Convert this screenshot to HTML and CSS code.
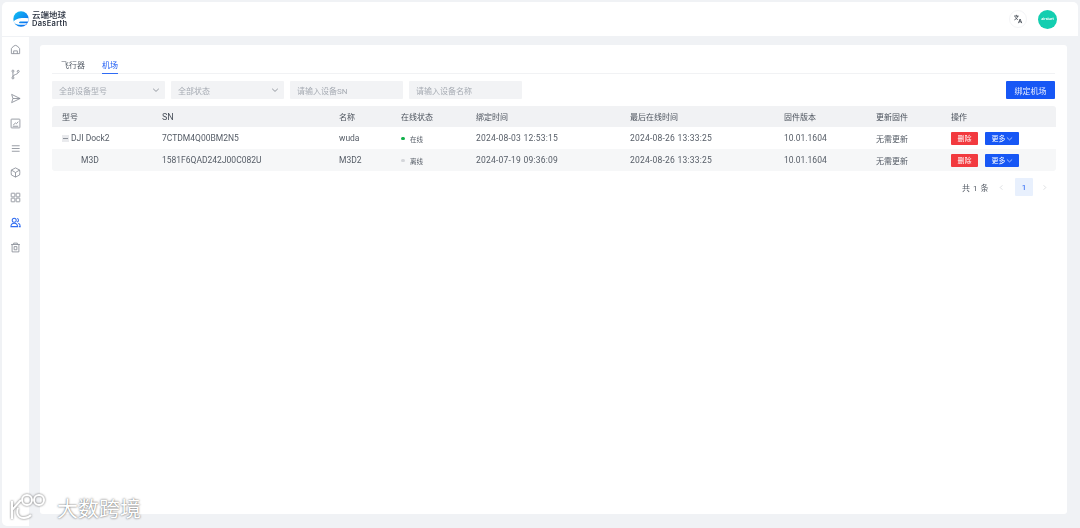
FILE: index.html
```html
<!DOCTYPE html>
<html lang="zh-CN">
<head>
<meta charset="utf-8">
<title>机场</title>
<link rel="stylesheet" href="styles.css">
</head>
<body>
<div class="app">
  <header class="topbar">
    <div class="brand">
      <svg class="brand-mark" viewBox="0 0 16 16">
        <defs><linearGradient id="earth" x1="0" y1="0" x2="1" y2="1"><stop offset="0" stop-color="#12c3f2"/><stop offset="1" stop-color="#0a62f0"/></linearGradient></defs>
        <circle cx="8" cy="8" r="7.7" fill="url(#earth)"/>
        <path d="M.6 10.400C3 7.600 7 6.200 15.700 7.200c0 1.300-.3 2.300-.8 3.200H8.200c-1.300 0-2.200.5-2.200 1 0 .6 1.200.9 2.800.9h5.200c-.5.500-1 1-1.700 1.400H6.200C3.800 13.700 1.500 12.600.6 10.400z" fill="#fff"/>
      </svg>
      <div class="brand-text"><span class="brand-cn">云端地球</span><span class="brand-en">DasEarth</span></div>
    </div>
    <div class="top-actions">
      <span class="lang-btn">
        <svg viewBox="0 0 12 12" class="lang-icon"><path d="M1.200 2.500h5.600M4 1v1.500M5.700 2.500c-.5 2-1.800 3.500-4 4.600M2.800 4c.6 1.200 1.500 2 3 2.800M6.500 11l2-5 2 5M7.200 9.400h2.600" fill="none" stroke="#3d444e" stroke-width="1"/></svg>
      </span>
      <span class="avatar"><span class="avatar-text">airstart</span></span>
    </div>
  </header>
  <div class="body-row">
    <nav class="sidebar">
      <svg class="nav-icon" viewBox="0 0 12 12"><path d="M1.500 5 4 2.200q2-1.400 4 0L10.500 5v5.500h-9zM4 10.500V7.500h4v3"/></svg>
      <svg class="nav-icon" viewBox="0 0 12 12"><circle cx="3.200" cy="2.300" r="1.100"/><circle cx="3.200" cy="9.700" r="1.100"/><circle cx="9" cy="2.600" r="1.100"/><path d="M3.200 3.400v5.200M9 3.700c0 2.500-5.800 2-5.800 4.700"/></svg>
      <svg class="nav-icon" viewBox="0 0 12 12"><path d="M1.800 1.500 11 6l-9.200 4.500L3.200 6zM3.200 6H11"/></svg>
      <svg class="nav-icon" viewBox="0 0 12 12"><rect x="1.200" y="1.200" width="9.600" height="9.600" rx=".6"/><path d="M3 9h6M3.500 7.600 6 5.500l1 .8 2-2.300"/></svg>
      <svg class="nav-icon" viewBox="0 0 12 12"><path d="M2 3h8.500M2 6h8.500M2 9h8.500"/></svg>
      <svg class="nav-icon" viewBox="0 0 12 12"><path d="M6 1 10.500 3.300c.3 1.600.3 3.800 0 5.400L6 11 1.500 8.700c-.3-1.600-.3-3.800 0-5.400zM1.500 3.300 6 6l4.500-2.700M6 6v5"/></svg>
      <svg class="nav-icon" viewBox="0 0 12 12"><rect x="1.300" y="1.300" width="4" height="4" rx=".4"/><rect x="6.700" y="1.300" width="4" height="4" rx=".4"/><rect x="1.300" y="6.700" width="4" height="4" rx=".4"/><rect x="6.700" y="6.700" width="4" height="4" rx=".4"/></svg>
      <svg class="nav-icon nav-icon-active" viewBox="0 0 12 12"><circle cx="4.600" cy="3.500" r="2.200"/><path d="M1 10.500c0-2.500 1.500-3.700 3.600-3.700s3.600 1.200 3.600 3.700zM7.800 1.500a2.100 2.100 0 0 1 0 4M9 6.900c1.400.4 2.200 1.500 2.200 3.600H9.600"/></svg>
      <svg class="nav-icon" viewBox="0 0 12 12"><path d="M1.200 2.700h9.600M4 2.700V1.200h4v1.500M2.300 2.700v8.100h7.400V2.700M4.500 5v3.500h3V5z"/></svg>
    </nav>
    <main class="content">
      <section class="card">
        <div class="tabs">
          <span class="tab">飞行器</span>
          <span class="tab tab-active">机场</span>
        </div>
        <div class="filters">
          <div class="field field-select"><span>全部设备型号</span><svg class="caret" viewBox="0 0 8 8"><path d="m1.200 2.800 2.800 2.600 2.800-2.600"/></svg></div>
          <div class="field field-select"><span>全部状态</span><svg class="caret" viewBox="0 0 8 8"><path d="m1.200 2.800 2.800 2.600 2.800-2.600"/></svg></div>
          <div class="field"><span>请输入设备SN</span></div>
          <div class="field"><span>请输入设备名称</span></div>
          <button class="btn-primary">绑定机场</button>
        </div>
        <div class="table">
          <div class="row row-head">
            <span>型号</span><span class="latin">SN</span><span>名称</span><span>在线状态</span><span>绑定时间</span><span>最后在线时间</span><span>固件版本</span><span>更新固件</span><span>操作</span>
          </div>
          <div class="row">
            <span class="model"><i class="collapse"></i>DJI Dock2</span><span>7CTDM4Q00BM2N5</span><span>wuda</span>
            <span class="status"><i class="dot dot-on"></i>在线</span>
            <span class="time">2024-08-03 12:53:15</span><span class="time">2024-08-26 13:33:25</span><span>10.01.1604</span><span class="cjk">无需更新</span>
            <span class="ops"><button class="btn-del">删除</button><button class="btn-more">更多<svg viewBox="0 0 8 8"><path d="m1 2.800 3 2.800 3-2.800"/></svg></button></span>
          </div>
          <div class="row row-alt">
            <span class="model-child">M3D</span><span>1581F6QAD242J00C082U</span><span>M3D2</span>
            <span class="status"><i class="dot dot-off"></i>离线</span>
            <span class="time">2024-07-19 09:36:09</span><span class="time">2024-08-26 13:33:25</span><span>10.01.1604</span><span class="cjk">无需更新</span>
            <span class="ops"><button class="btn-del">删除</button><button class="btn-more">更多<svg viewBox="0 0 8 8"><path d="m1 2.800 3 2.800 3-2.800"/></svg></button></span>
          </div>
        </div>
        <div class="pager">
          <span class="total">共 1 条</span>
          <svg class="pg-arrow" viewBox="0 0 8 8"><path d="M5 1.500 2.500 4 5 6.500"/></svg>
          <span class="pg-num">1</span>
          <svg class="pg-arrow" viewBox="0 0 8 8"><path d="M3 1.500 5.500 4 3 6.500"/></svg>
        </div>
      </section>
    </main>
  </div>
</div>
<div class="watermark">
  <svg viewBox="0 0 42 30" class="wm-logo"><path d="M3 9v18M3 18 12 8M9 16c-2 5 0 10 6 10 3 0 5-1 7-3"/><circle cx="18" cy="8" r="5"/><circle cx="30" cy="8" r="5"/></svg>
  <span class="wm-text">大数跨境</span>
</div>
</body>
</html>
```
FILE: styles.css
```css
* { box-sizing: border-box; }
html, body { margin: 0; height: 100%; }
body {
  width: 1080px;
  height: 528px;
  overflow: hidden;
  background: #f0f2f5;
  font-family: Roboto, "Noto Sans CJK SC", sans-serif;
  font-size: 8px;
  color: #4e5560;
  position: relative;
}
.app {
  height: 100%;
  padding: 2px;
  display: flex;
  flex-direction: column;
  gap: 1px;
  filter: blur(.45px);
}
.topbar {
  height: 34px;
  flex: none;
  background: #fff;
  border-radius: 5px 5px 0 0;
  display: flex;
  align-items: center;
  justify-content: space-between;
  padding: 0 21px 0 11px;
}
.brand { display: flex; align-items: center; gap: 3px; }
.brand-mark { width: 16px; height: 16px; }
.brand-text { display: flex; flex-direction: column; color: #2a3240; line-height: 9px; }
.brand-cn { font-size: 8.500px; font-weight: 500; }
.brand-en { font-family: Inter, sans-serif; font-size: 7.500px; font-weight: 600; letter-spacing: .3px; line-height: 7px; }
.top-actions { display: flex; align-items: center; gap: 11px; }
.lang-btn {
  width: 18px; height: 18px;
  border-radius: 50%;
  border: 1px solid #f4f5f7;
  display: flex; align-items: center; justify-content: center;
}
.lang-icon { width: 10px; height: 10px; }
.avatar {
  width: 19px; height: 19px;
  border-radius: 50%;
  background: #13ceb0;
  display: flex; align-items: center; justify-content: center;
  color: #fff;
  overflow: hidden;
}
.avatar-text { font-family: Inter, sans-serif; font-size: 3.500px; font-weight: 700; }
.body-row { flex: 1; display: flex; min-height: 0; }
.sidebar {
  width: 27px;
  flex: none;
  background: #fff;
  border-radius: 0 0 0 5px;
  display: flex;
  flex-direction: column;
  align-items: center;
  gap: 13.700px;
  padding-top: 7px;
}
.nav-icon {
  width: 11px; height: 11px;
  fill: none;
  stroke: #858b94;
  stroke-width: .9;
}
.nav-icon-active { stroke: #2f6bf0; stroke-width: 1.100; }
.content { flex: 1; padding: 8px 11px 12px 11px; display: flex; min-width: 0; }
.card {
  flex: 1;
  background: #fff;
  border-radius: 3px;
  padding: 10px 12px 0;
  min-width: 0;
}
.tabs {
  display: flex;
  gap: 17px;
  height: 19px;
  padding-left: 9px;
  border-bottom: 1px solid #f1f2f4;
  align-items: flex-start;
  line-height: 12px;
  padding-top: 5px;
}
.tab { height: 14px; font-size: 8px; color: #5a616b; }
.tab-active { color: #1d5cf5; border-bottom: 1px solid #2f6bf5; }
.filters { display: flex; gap: 6.500px; margin-top: 7px; }
.field {
  width: 112.500px;
  height: 18px;
  background: #f2f3f5;
  color: #a6abb3;
  display: flex;
  align-items: center;
  justify-content: space-between;
  padding: 0 7px;
  border-radius: 1px;
}
.field-select { padding-right: 5px; }
.caret { width: 8px; height: 8px; fill: none; stroke: #7d838c; stroke-width: .8; }
.btn-primary {
  margin-left: auto;
  width: 49px;
  height: 18px;
  border: 0;
  border-radius: 1px;
  background: #1757f5;
  color: #e6edff;
  font: inherit;
  padding: 0;
}
.table { margin-top: 7px; width: 1004px; }
.row {
  display: grid;
  grid-template-columns: 110px 177px 62px 75px 154px 154px 92px 75px 105px;
  height: 22px;
  align-items: center;
  font-size: 8.500px;
  color: #555c66;
}
.row-head {
  height: 21px;
  background: #f1f2f4;
  border-radius: 3px 3px 0 0;
  font-size: 8px;
  color: #4a515b;
}
.row .latin { font-size: 9px; }
.row > span:first-child { padding-left: 10px; }
.row-alt { background: #f6f7f8; border-radius: 0 0 3px 3px; }
.time { letter-spacing: .22px; }
.cjk { font-size: 8px; }
.model { display: flex; align-items: center; gap: 2px; padding-left: 10px; }
.model-child { padding-left: 29px !important; }
.collapse {
  width: 7px; height: 7px;
  background: #e9eaed;
  display: flex; align-items: center; justify-content: center;
}
.collapse::after { content: ""; width: 5px; height: 1px; background: #8d929a; }
.status { display: flex; align-items: center; gap: 5.500px; font-size: 6.500px; padding-top: 1px; }
.dot { width: 3.500px; height: 3.500px; border-radius: 50%; }
.dot-on { background: #10b04a; }
.dot-off { background: #d4d6da; }
.ops { display: flex; gap: 7px; align-items: center; }
.btn-del, .btn-more {
  height: 13px;
  border: 0;
  border-radius: 1px;
  padding: 0;
  font: inherit;
  font-size: 7px;
  color: #fff;
  display: flex; align-items: center; justify-content: center;
}
.btn-del { width: 27px; background: #f23a3f; }
.btn-more { width: 34px; background: #1757f5; }
.btn-more svg { width: 7px; height: 7px; fill: none; stroke: #fff; stroke-width: .7; }
.pager {
  display: flex;
  align-items: center;
  justify-content: flex-end;
  height: 18px;
  margin-top: 7px;
  width: 1004px;
  padding-right: 8px;
  color: #555c66;
}
.total { margin-right: 9px; letter-spacing: .5px; }
.pg-arrow { width: 7px; height: 7px; fill: none; stroke: #c9ccd1; stroke-width: .7; }
.pg-num {
  width: 18px; height: 18px;
  margin: 0 8px 0 10px;
  background: #e8f0fd;
  color: #1d5cf5;
  display: flex; align-items: center; justify-content: center;
  border-radius: 1px;
}
.watermark {
  position: absolute;
  left: 9px;
  bottom: 6px;
  display: flex;
  align-items: center;
  gap: 6px;
}
.wm-logo {
  width: 42px; height: 30px;
  fill: none;
  stroke: #fff;
  stroke-width: 2;
  filter: drop-shadow(0 0 1px rgba(70,70,70,.8));
}
.wm-text {
  font-family: "Noto Sans CJK SC", sans-serif;
  font-size: 21px;
  font-weight: 400;
  line-height: 26px;
  color: #fff;
  text-shadow: 0 0 2px rgba(50,50,50,.9);
}
```
